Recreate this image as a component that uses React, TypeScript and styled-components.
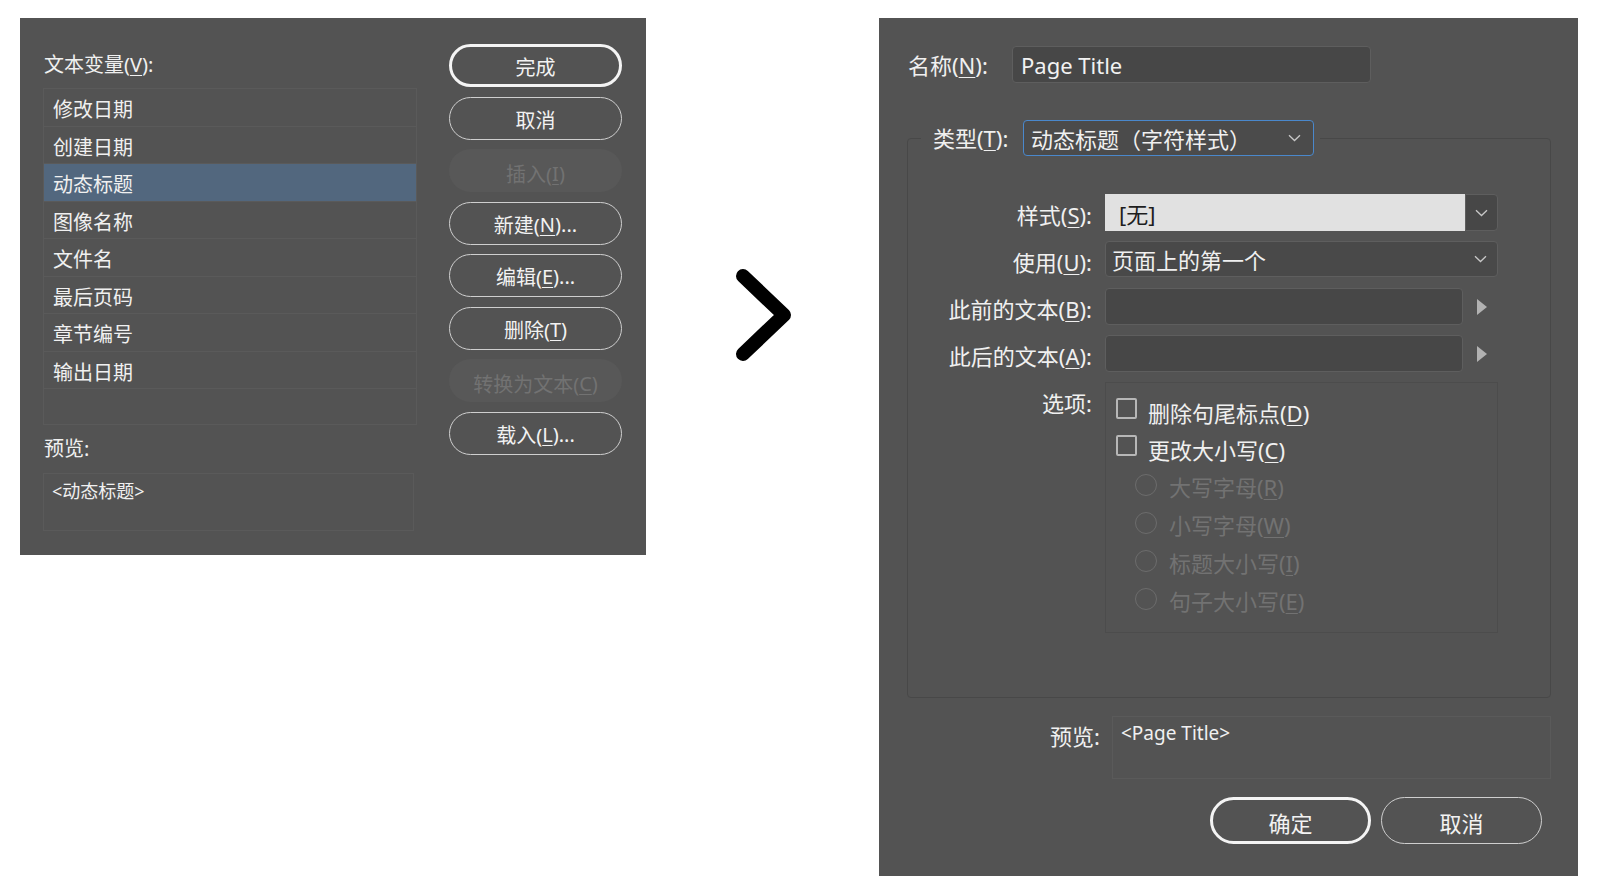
import React from "react";
import styled, { createGlobalStyle } from "styled-components";

const GlobalStyle = createGlobalStyle`
  html, body {
    margin: 0;
    padding: 0;
    background: #ffffff;
  }
  body {
    font-family: "Noto Sans", "Noto Sans CJK SC", sans-serif;
    color: #f0f0f0;
  }
`;

const Page = styled.div`
  display: flex;
  align-items: flex-start;
  width: 1597px;
  height: 895px;
  padding: 18px 0 0 20px;
  box-sizing: border-box;
`;

/* ---------- left: text variables dialog ---------- */

const VariablesDialog = styled.div`
  width: 626px;
  height: 537px;
  flex-shrink: 0;
  background: #535353;
  display: grid;
  grid-template-columns: 374px 173px;
  column-gap: 32px;
  align-items: start;
  padding: 26px 0 0 23px;
  box-sizing: border-box;
`;

const Column = styled.div`
  display: flex;
  flex-direction: column;
`;

const SmallLabel = styled.div<{ $top: number }>`
  font-size: 20px;
  line-height: 24px;
  margin-top: ${(p) => p.$top}px;
  padding-left: 1px;
`;

const Key = styled.u`
  text-decoration-thickness: 1px;
  text-underline-offset: 3px;
`;

const VarList = styled.div`
  margin-top: 11px;
  height: 337px;
  border: 1px solid #5a5a5a;
  box-sizing: border-box;
`;

const VarRow = styled.div<{ $selected?: boolean }>`
  height: 37.5px;
  box-sizing: border-box;
  border-bottom: 1px solid #5a5a5a;
  display: flex;
  align-items: center;
  padding: 3px 0 0 9px;
  font-size: 20px;
  background: ${(p) => (p.$selected ? "#52677e" : "transparent")};
`;

const PreviewSmall = styled.div`
  margin-top: 12px;
  width: 371px;
  height: 58px;
  border: 1px solid #5a5a5a;
  box-sizing: border-box;
  padding: 6px 8px;
  font-size: 18px;
  line-height: 22px;
`;

const ButtonStack = styled.div`
  display: flex;
  flex-direction: column;
  gap: 9.5px;
`;

const PillButton = styled.button<{ $primary?: boolean; $w: number; $h: number; $size: number }>`
  width: ${(p) => p.$w}px;
  height: ${(p) => p.$h}px;
  border-radius: ${(p) => p.$h / 2}px;
  box-sizing: border-box;
  background: transparent;
  border: ${(p) => (p.$primary ? "3px solid #f4f4f4" : "1.5px solid #cfcfcf")};
  color: #f2f2f2;
  font-family: inherit;
  font-size: ${(p) => p.$size}px;
  padding: 2px 0 0 0;
  display: flex;
  align-items: center;
  justify-content: center;

  &:disabled {
    background: #585858;
    border-color: transparent;
    color: #727272;
    padding-top: 5px;
  }
`;

/* ---------- arrow between the dialogs ---------- */

const ArrowColumn = styled.div`
  width: 233px;
  flex-shrink: 0;
  padding: 250px 0 0 89px;
  box-sizing: border-box;
`;

/* ---------- right: edit text variable dialog ---------- */

const EditDialog = styled.div`
  width: 699px;
  height: 858px;
  flex-shrink: 0;
  background: #535353;
  padding: 28px 27px 0 28px;
  box-sizing: border-box;
  display: flex;
  flex-direction: column;
  font-size: 22px;
`;

const NameRow = styled.div`
  display: flex;
  align-items: center;
  padding-left: 1px;
`;

const NameLabel = styled.div`
  width: 104px;
  line-height: 26px;
`;

const TextField = styled.div<{ $w: number }>`
  width: ${(p) => p.$w}px;
  height: 37px;
  box-sizing: border-box;
  background: #474747;
  border: 1.5px solid #5e5e5e;
  border-radius: 4px;
  padding-left: 8px;
  display: flex;
  align-items: center;
  color: #f2f2f2;
`;

const Group = styled.fieldset`
  margin: 37px 0 0 0;
  padding: 38px 0 64px 0;
  width: 644px;
  min-width: 0;
  box-sizing: border-box;
  border: 1px solid #484848;
  border-radius: 4px;
`;

const GroupLegend = styled.legend`
  margin-left: 13px;
  padding: 0 6px 0 12px;
`;

const LegendInner = styled.span`
  display: inline-flex;
  align-items: center;
`;

const TypeLabel = styled.span`
  width: 90px;
  line-height: 26px;
`;

const TypeSelect = styled.div`
  width: 291px;
  height: 36px;
  box-sizing: border-box;
  background: #4b4b4b;
  border: 1.5px solid #4a88cc;
  border-radius: 4px;
  padding: 0 12px 0 7px;
  display: flex;
  align-items: center;
  justify-content: space-between;
`;

const FormGrid = styled.div`
  display: grid;
  grid-template-columns: 184px 393px;
  grid-template-rows: repeat(4, 37px) auto;
  column-gap: 13px;
  row-gap: 10px;
`;

const RowLabel = styled.div<{ $top?: boolean }>`
  text-align: right;
  line-height: 26px;
  align-self: ${(p) => (p.$top ? "start" : "center")};
  padding-top: ${(p) => (p.$top ? "8px" : "4px")};
`;

const Combo = styled.div`
  display: flex;
  height: 37px;
`;

const ComboValue = styled.div`
  width: 360px;
  box-sizing: border-box;
  background: #e1e1e1;
  color: #1e1e1e;
  padding-left: 14px;
  display: flex;
  align-items: center;
`;

const ComboButton = styled.div`
  flex: 1;
  background: #474747;
  border: 1.5px solid #5e5e5e;
  border-radius: 0 4px 4px 0;
  display: flex;
  align-items: center;
  justify-content: center;
`;

const Select = styled.div`
  height: 36px;
  box-sizing: border-box;
  background: #494949;
  border: 1.5px solid #5e5e5e;
  border-radius: 4px;
  padding: 0 10px 0 6px;
  display: flex;
  align-items: center;
  justify-content: space-between;
`;

const FieldWithMenu = styled.div`
  display: flex;
  align-items: center;
  gap: 14px;
`;

const OptionsBox = styled.div`
  height: 251px;
  border: 1px solid #4c4c4c;
  box-sizing: border-box;
  padding: 10px 0 0 10px;
`;

const CheckRow = styled.div`
  height: 37px;
  display: flex;
  align-items: center;
  gap: 11px;
`;

const CheckBox = styled.span`
  width: 21px;
  height: 21px;
  box-sizing: border-box;
  border: 2px solid #b7b7b7;
  border-radius: 2px;
  margin-top: -6px;
`;

const RadioRow = styled.div`
  height: 38px;
  display: flex;
  align-items: center;
  gap: 12px;
  padding-left: 19px;
  color: #727272;
`;

const RadioDot = styled.span`
  width: 22px;
  height: 22px;
  box-sizing: border-box;
  border: 1.5px solid #6c6c6c;
  border-radius: 50%;
  margin-top: -3px;
`;

const PreviewRow = styled.div`
  margin-top: 18px;
  display: flex;
  justify-content: flex-end;
  align-items: flex-start;
  gap: 12px;
`;

const PreviewLabel = styled.div`
  padding-top: 7px;
  line-height: 26px;
`;

const PreviewBox = styled.div`
  width: 439px;
  height: 63px;
  box-sizing: border-box;
  border: 1px solid #5a5a5a;
  padding: 4px 8px;
  font-size: 19px;
  line-height: 24px;
`;

const ActionRow = styled.div`
  margin-top: 18px;
  display: flex;
  justify-content: flex-end;
  gap: 10px;
  padding-right: 9px;
`;

const ChevronDown = () => (
  <svg width="13" height="8" viewBox="0 0 13 8">
    <path d="M1 1.2 L6.5 6.5 L12 1.2" fill="none" stroke="#c8c8c8" strokeWidth="1.3" />
  </svg>
);

const MenuTriangle = () => (
  <svg width="10" height="16" viewBox="0 0 10 16">
    <path d="M0 0 L10 8 L0 16 Z" fill="#b2b2b2" />
  </svg>
);

const variables = ["修改日期", "创建日期", "动态标题", "图像名称", "文件名", "最后页码", "章节编号", "输出日期"];

function App() {
  return (
    <>
      <GlobalStyle />
      <Page>
        <VariablesDialog>
          <Column>
            <SmallLabel $top={9}>
              文本变量(<Key>V</Key>):
            </SmallLabel>
            <VarList>
              {variables.map((name) => (
                <VarRow key={name} $selected={name === "动态标题"}>
                  {name}
                </VarRow>
              ))}
            </VarList>
            <SmallLabel $top={12}>预览:</SmallLabel>
            <PreviewSmall>&lt;动态标题&gt;</PreviewSmall>
          </Column>
          <ButtonStack>
            <PillButton $primary $w={173} $h={43} $size={20}>完成</PillButton>
            <PillButton $w={173} $h={43} $size={20}>取消</PillButton>
            <PillButton $w={173} $h={43} $size={20} disabled>
              插入(<Key>I</Key>)
            </PillButton>
            <PillButton $w={173} $h={43} $size={20}>
              新建(<Key>N</Key>)...
            </PillButton>
            <PillButton $w={173} $h={43} $size={20}>
              编辑(<Key>E</Key>)...
            </PillButton>
            <PillButton $w={173} $h={43} $size={20}>
              删除(<Key>T</Key>)
            </PillButton>
            <PillButton $w={173} $h={43} $size={20} disabled>
              转换为文本(<Key>C</Key>)
            </PillButton>
            <PillButton $w={173} $h={43} $size={20}>
              载入(<Key>L</Key>)...
            </PillButton>
          </ButtonStack>
        </VariablesDialog>

        <ArrowColumn>
          <svg width="56" height="94" viewBox="0 0 56 94">
            <path
              d="M8 8 L49 47 L8 86"
              fill="none"
              stroke="#000"
              strokeWidth="14"
              strokeLinecap="round"
              strokeLinejoin="round"
            />
          </svg>
        </ArrowColumn>

        <EditDialog>
          <NameRow>
            <NameLabel>
              名称(<Key>N</Key>):
            </NameLabel>
            <TextField $w={359}>Page Title</TextField>
          </NameRow>

          <Group>
            <GroupLegend>
              <LegendInner>
                <TypeLabel>
                  类型(<Key>T</Key>):
                </TypeLabel>
                <TypeSelect>
                  <span>动态标题（字符样式）</span>
                  <ChevronDown />
                </TypeSelect>
              </LegendInner>
            </GroupLegend>

            <FormGrid>
              <RowLabel>
                样式(<Key>S</Key>):
              </RowLabel>
              <Combo>
                <ComboValue>[无]</ComboValue>
                <ComboButton>
                  <ChevronDown />
                </ComboButton>
              </Combo>

              <RowLabel>
                使用(<Key>U</Key>):
              </RowLabel>
              <Select>
                <span>页面上的第一个</span>
                <ChevronDown />
              </Select>

              <RowLabel>
                此前的文本(<Key>B</Key>):
              </RowLabel>
              <FieldWithMenu>
                <TextField $w={358} />
                <MenuTriangle />
              </FieldWithMenu>

              <RowLabel>
                此后的文本(<Key>A</Key>):
              </RowLabel>
              <FieldWithMenu>
                <TextField $w={358} />
                <MenuTriangle />
              </FieldWithMenu>

              <RowLabel $top>选项:</RowLabel>
              <OptionsBox>
                <CheckRow>
                  <CheckBox />
                  <span>
                    删除句尾标点(<Key>D</Key>)
                  </span>
                </CheckRow>
                <CheckRow>
                  <CheckBox />
                  <span>
                    更改大小写(<Key>C</Key>)
                  </span>
                </CheckRow>
                <RadioRow>
                  <RadioDot />
                  <span>
                    大写字母(<Key>R</Key>)
                  </span>
                </RadioRow>
                <RadioRow>
                  <RadioDot />
                  <span>
                    小写字母(<Key>W</Key>)
                  </span>
                </RadioRow>
                <RadioRow>
                  <RadioDot />
                  <span>
                    标题大小写(<Key>I</Key>)
                  </span>
                </RadioRow>
                <RadioRow>
                  <RadioDot />
                  <span>
                    句子大小写(<Key>E</Key>)
                  </span>
                </RadioRow>
              </OptionsBox>
            </FormGrid>
          </Group>

          <PreviewRow>
            <PreviewLabel>预览:</PreviewLabel>
            <PreviewBox>&lt;Page Title&gt;</PreviewBox>
          </PreviewRow>

          <ActionRow>
            <PillButton $primary $w={161} $h={47} $size={22}>确定</PillButton>
            <PillButton $w={161} $h={47} $size={22}>取消</PillButton>
          </ActionRow>
        </EditDialog>
      </Page>
    </>
  );
}

export default App;
